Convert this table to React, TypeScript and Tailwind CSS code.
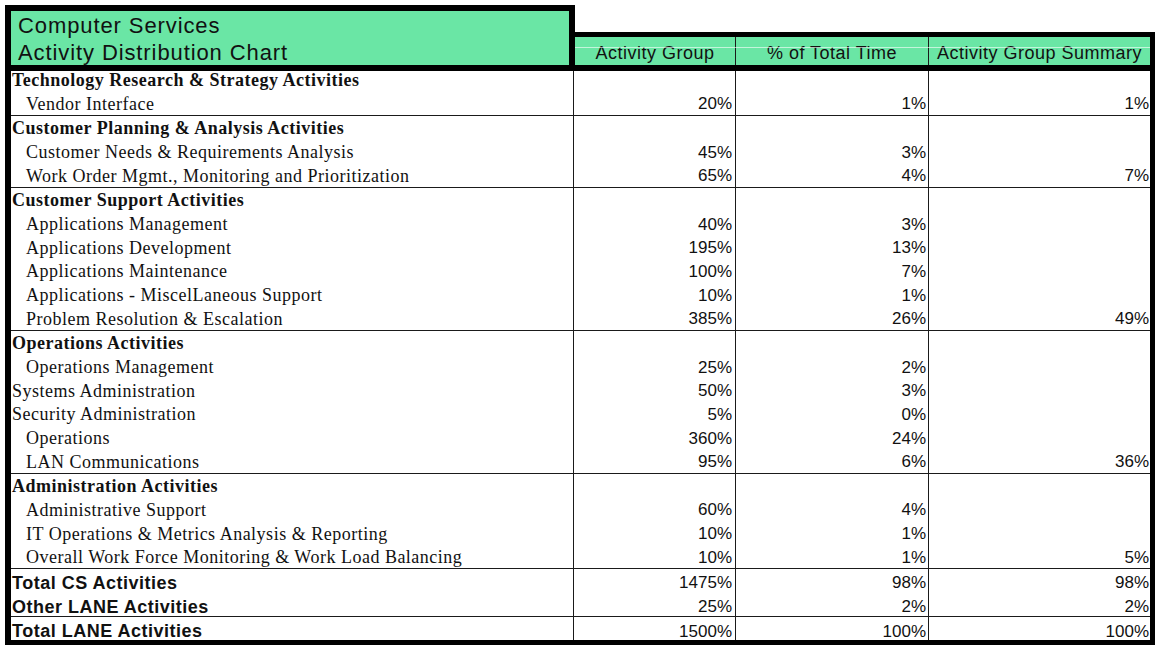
type Kind = "group" | "item" | "flat" | "total";

type Row = {
  label: string;
  kind: Kind;
  a?: string;
  b?: string;
  c?: string;
  sep?: boolean;
};

const rows: Row[] = [
  { label: "Technology Research & Strategy Activities", kind: "group" },
  { label: "Vendor Interface", kind: "item", a: "20%", b: "1%", c: "1%" },

  { label: "Customer Planning & Analysis Activities", kind: "group", sep: true },
  { label: "Customer Needs & Requirements Analysis", kind: "item", a: "45%", b: "3%" },
  { label: "Work Order Mgmt., Monitoring and Prioritization", kind: "item", a: "65%", b: "4%", c: "7%" },

  { label: "Customer Support Activities", kind: "group", sep: true },
  { label: "Applications Management", kind: "item", a: "40%", b: "3%" },
  { label: "Applications Development", kind: "item", a: "195%", b: "13%" },
  { label: "Applications Maintenance", kind: "item", a: "100%", b: "7%" },
  { label: "Applications - MiscelLaneous Support", kind: "item", a: "10%", b: "1%" },
  { label: "Problem Resolution & Escalation", kind: "item", a: "385%", b: "26%", c: "49%" },

  { label: "Operations Activities", kind: "group", sep: true },
  { label: "Operations Management", kind: "item", a: "25%", b: "2%" },
  { label: "Systems Administration", kind: "flat", a: "50%", b: "3%" },
  { label: "Security Administration", kind: "flat", a: "5%", b: "0%" },
  { label: "Operations", kind: "item", a: "360%", b: "24%" },
  { label: "LAN Communications", kind: "item", a: "95%", b: "6%", c: "36%" },

  { label: "Administration Activities", kind: "group", sep: true },
  { label: "Administrative Support", kind: "item", a: "60%", b: "4%" },
  { label: "IT Operations & Metrics Analysis & Reporting", kind: "item", a: "10%", b: "1%" },
  { label: "Overall Work Force Monitoring & Work Load Balancing", kind: "item", a: "10%", b: "1%", c: "5%" },

  { label: "Total CS Activities", kind: "total", a: "1475%", b: "98%", c: "98%", sep: true },
  { label: "Other LANE Activities", kind: "total", a: "25%", b: "2%", c: "2%" },

  { label: "Total LANE Activities", kind: "total", a: "1500%", b: "100%", c: "100%", sep: true },
];

const serif = "font-['Liberation_Serif','Times_New_Roman',serif]";
const sans = "font-['Liberation_Sans',Arial,sans-serif]";

function labelClass(kind: Kind) {
  if (kind === "group") return `${serif} font-bold text-[18px] tracking-[0.5px] pl-[1px]`;
  if (kind === "total") return `${sans} font-bold text-[18px] tracking-[0.5px] pl-[1px]`;
  if (kind === "flat") return `${serif} text-[18px] tracking-[0.5px] pl-[1px]`;
  return `${serif} text-[18px] tracking-[0.5px] pl-[15px]`;
}

// first row sits tight under the header, last one above the bottom rule
function rowHeight(i: number) {
  if (i === 0) return "h-[20px]";
  if (i === rows.length - 1) return "h-[22.3px]";
  return "h-[23.67px]";
}

function cellShift(row: Row, i: number) {
  if (i === 0) return "pb-[3px]";
  if (i === rows.length - 1) return "pt-[5px]";
  if (row.kind === "total") return "pt-[4px]";
  return "pt-[2px]";
}

function TableRow({ row, index }: { row: Row; index: number }) {
  const shift = cellShift(row, index);
  const num = `flex items-center justify-end border-l-[1.5px] border-[#1a1a1a] ${sans} text-[17px] ${shift}`;
  return (
    <div
      className={`flex box-content leading-none text-[#111] ${rowHeight(index)} ${
        row.sep ? "border-t border-[#1a1a1a]" : ""
      }`}
    >
      <div className={`w-[562px] flex items-center whitespace-nowrap ${labelClass(row.kind)} ${shift}`}>
        {row.label}
      </div>
      <div className={`w-[162px] pr-[3px] ${num}`}>{row.a}</div>
      <div className={`w-[193px] pr-[2px] ${num}`}>{row.b}</div>
      <div className={`flex-1 pr-[1px] ${num}`}>{row.c}</div>
    </div>
  );
}

export default function App() {
  const head = `flex items-end justify-center pb-[3px] leading-none ${sans} text-[18px] tracking-[0.5px] text-[#111]`;
  return (
    <div className="w-[1165px] h-[645px] bg-white pt-[5px] pl-[5px] overflow-hidden">
      <div className="w-[1150px]">
        {/* title + column headers */}
        <div className="flex items-end">
          <div className="w-[570px] h-[60px] border-[6px] border-b-0 border-black bg-[#6ae6a5] pl-[7px] pt-[1px]">
            <div className={`${sans} text-[22px] tracking-[0.9px] leading-[27px] text-[#111]`}>
              Computer Services
            </div>
            <div className={`${sans} text-[22px] tracking-[0.9px] leading-[27px] text-[#111]`}>
              Activity Distribution Chart
            </div>
          </div>
          <div className="relative flex-1 h-[33px] border-t-[5px] border-r-[5px] border-black bg-[#6ae6a5] flex">
            <div className={`w-[160px] ${head}`}>Activity Group</div>
            <div className={`w-[193px] border-l-[1.5px] border-[#1a1a1a] ${head}`}>% of Total Time</div>
            <div className={`flex-1 border-l-[1.5px] border-[#1a1a1a] ${head}`}>Activity Group Summary</div>
            <div className="absolute left-0 right-0 top-[10px] h-px bg-white/60" />
          </div>
        </div>

        {/* body */}
        <div className="border-t-[6px] border-l-[6px] border-r-[5px] border-b-[5px] border-black bg-white">
          {rows.map((row, i) => (
            <TableRow key={row.label} row={row} index={i} />
          ))}
        </div>
      </div>
    </div>
  );
}
